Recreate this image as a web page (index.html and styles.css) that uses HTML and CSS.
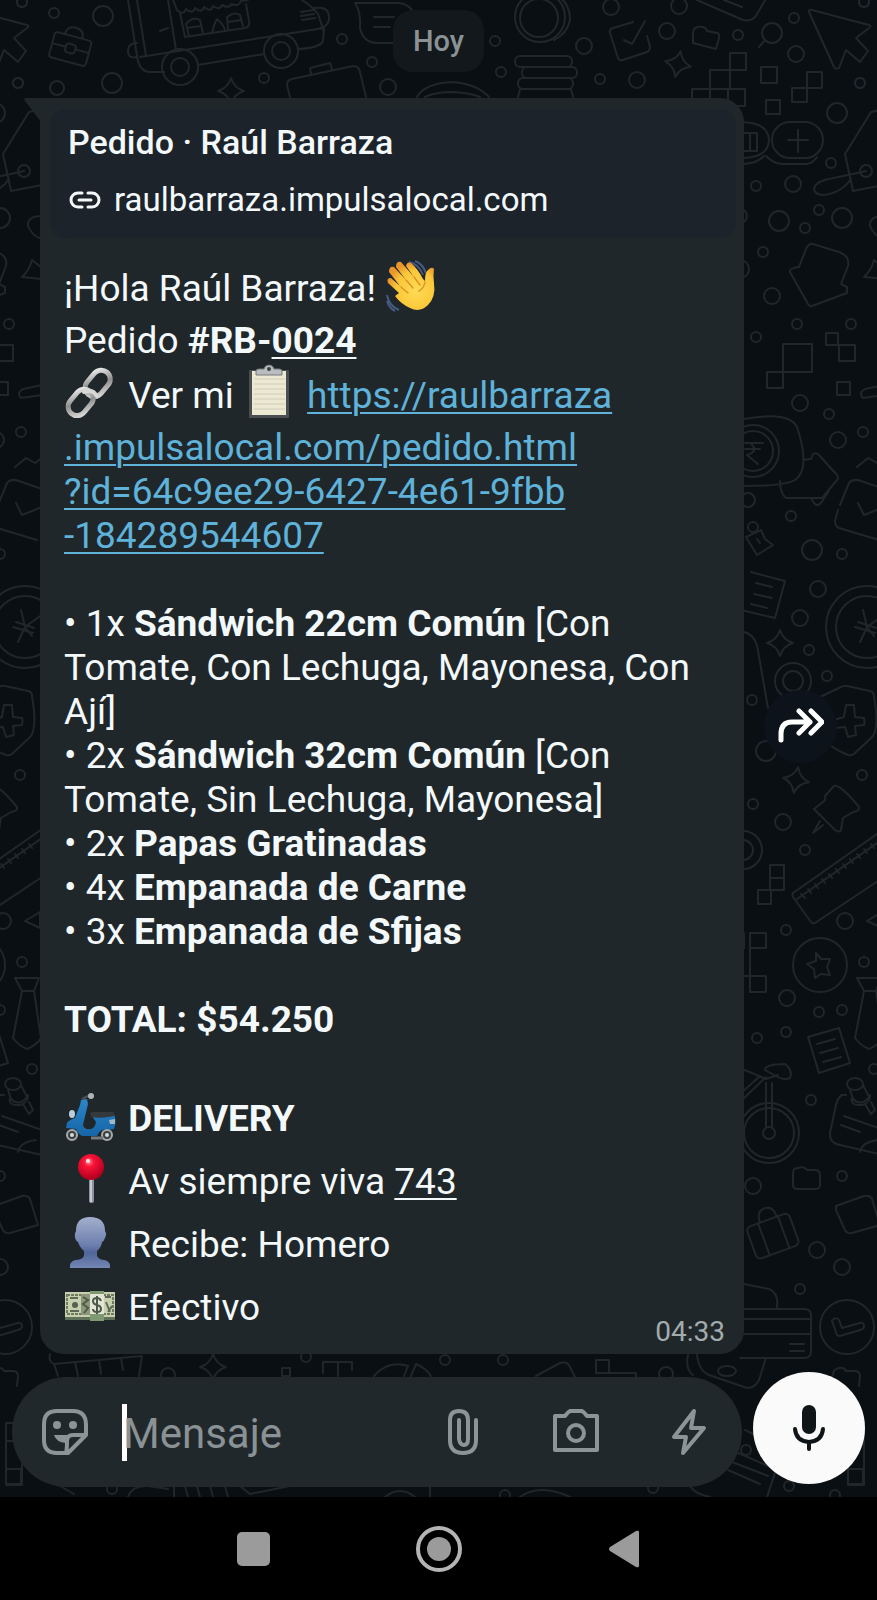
FILE: index.html
```html
<!DOCTYPE html>
<html lang="es">
<head>
  <meta charset="UTF-8" />
  <meta name="viewport" content="width=device-width, initial-scale=1" />
  <title>Pedido · Raúl Barraza</title>
  <link rel="stylesheet" href="styles.css">
</head>
<body>
  <main class="chat">
    <!-- Fondo con dibujos -->
    <svg class="wallpaper" aria-hidden="true">
      <defs>
        <path id="spark" d="M0-13Q3-3 13 0Q3 3 0 13Q-3 3-13 0Q-3-3 0-13z" />
        <g id="doodles">
          <!-- burbujas chicas -->
          <g>
            <circle cx="22" cy="2" r="5"/><circle cx="54" cy="13" r="5"/><circle cx="18" cy="83" r="5"/><circle cx="264" cy="78" r="5"/>
            <circle cx="342" cy="39" r="5"/><circle cx="372" cy="62" r="5"/><circle cx="495" cy="41" r="5"/><circle cx="501" cy="72" r="5"/>
            <circle cx="600" cy="79" r="5"/><circle cx="738" cy="35" r="5"/><circle cx="794" cy="18" r="5"/><circle cx="860" cy="83" r="5"/><circle cx="864" cy="2" r="5"/>
            <circle cx="831" cy="163" r="5"/><circle cx="756" cy="186" r="5"/><circle cx="819" cy="210" r="5"/><circle cx="805" cy="228" r="5"/>
            <circle cx="763" cy="252" r="5"/><circle cx="797" cy="324" r="5"/><circle cx="851" cy="324" r="5"/><circle cx="756" cy="337" r="5"/>
            <circle cx="829" cy="414" r="5"/><circle cx="863" cy="432" r="5"/><circle cx="791" cy="516" r="5"/><circle cx="842" cy="554" r="5"/>
            <circle cx="809" cy="650" r="5"/><circle cx="827" cy="676" r="5"/><circle cx="752" cy="700" r="5"/><circle cx="862" cy="775" r="5"/>
            <circle cx="753" cy="804" r="5"/><circle cx="805" cy="850" r="5"/><circle cx="786" cy="930" r="5"/><circle cx="864" cy="962" r="5"/>
            <circle cx="819" cy="1012" r="5"/><circle cx="842" cy="1010" r="5"/><circle cx="757" cy="1038" r="5"/><circle cx="786" cy="1032" r="5"/>
            <circle cx="874" cy="1069" r="5"/><circle cx="811" cy="1100" r="5"/><circle cx="842" cy="1176" r="5"/><circle cx="800" cy="1289" r="5"/>
            <circle cx="306" cy="1357" r="5"/><circle cx="445" cy="1360" r="5"/><circle cx="503" cy="1360" r="5"/><circle cx="112" cy="1489" r="5"/>
            <circle cx="653" cy="1488" r="5"/><circle cx="505" cy="1495" r="5"/><circle cx="789" cy="1486" r="5"/><circle cx="835" cy="1495" r="5"/><circle cx="168" cy="1375" r="7"/><circle cx="666" cy="1374" r="7"/>
          </g>
          <!-- burbujas grandes -->
          <g>
            <circle cx="103" cy="16" r="10"/><circle cx="57" cy="88" r="7"/><circle cx="112" cy="83" r="10"/><circle cx="388" cy="87" r="8"/>
            <circle cx="611" cy="7" r="8"/><circle cx="679" cy="6" r="8"/><circle cx="667" cy="31" r="8"/><circle cx="584" cy="46" r="8"/><circle cx="637" cy="80" r="8"/>
            <circle cx="796" cy="54" r="8"/><circle cx="837" cy="113" r="10"/><circle cx="793" cy="184" r="8"/><circle cx="779" cy="221" r="10"/><circle cx="842" cy="218" r="10"/>
            <circle cx="772" cy="296" r="8"/><circle cx="800" cy="403" r="8"/><circle cx="838" cy="440" r="8"/><circle cx="748" cy="500" r="7"/><circle cx="812" cy="550" r="10"/>
            <circle cx="818" cy="589" r="8"/><circle cx="800" cy="618" r="8"/><circle cx="766" cy="751" r="10"/><circle cx="783" cy="822" r="8"/>
            <circle cx="845" cy="921" r="8"/><circle cx="787" cy="998" r="8"/><circle cx="753" cy="1186" r="8"/><circle cx="817" cy="1250" r="8"/><circle cx="842" cy="1267" r="8"/>
            <circle cx="740" cy="269" r="9"/><circle cx="740" cy="216" r="7"/>
          </g>
          <!-- maletín -->
          <g transform="rotate(15 70 50)">
            <rect x="51" y="36" width="38" height="26" rx="3"/><path d="M61 36q0-9 9-9t9 9M51 48h14M75 48h14"/><rect x="65" y="44" width="10" height="9" rx="3"/>
          </g>
          <!-- camión de comida -->
          <path d="M128 0l9 56q2 15 12 16h15M198 65l66-11M298 49q22-1 25-8l1-13-184 29M137 43q-9 0-9 8t9 6M137 0l9 56M168 0l8 50M173 0l4 10q7 6 9-1q7 6 9-1q7 6 9-1q7 6 9-1q7 5 9-1q8 4 9-1q8 3 10-3l7-1M180 13l5 24 60-9q5-1 4-7l-3-17M160 31l8-3M302 0q12 8 16 14l6 18M301 12l12-2M301 16l13-2M302 20l13-2M314 8q14-2 15 8t-9 12"/>
          <path d="M189 36l-3-12q6-8 14-4l3 13M212 33q2-9 5-14 8 7 8 12M228 29l-1-12q8-6 13-2l3 11M187 28l14-2M228 22l13-2"/>
          <circle cx="180" cy="67" r="18"/><circle cx="180" cy="67" r="9"/><circle cx="281" cy="51" r="17"/><circle cx="281" cy="51" r="9"/>
          <use href="#spark" x="231" y="91"/>
          <path d="M290 97l-3-12q0-5 5-6l61-13q6 0 7 6l6 25M311 74l-1-6 20-5 2 6"/>
          <path d="M355 3h45q12 2 14 13M355 3q6 8 5 25q3 14 16 15h24M374 17h20M374 27h16"/>
          <path d="M417 97q8-14 36-15 24 2 36 15M425 97q10-5 28-5 18 1 27 5"/>
          <!-- monedas -->
          <circle cx="540" cy="17" r="25"/><circle cx="539" cy="18" r="19"/><path d="M548-8q22 6 22 28-3 14-16 20"/>
          <rect x="515" y="56" width="57" height="11" rx="5"/><rect x="522" y="67" width="55" height="11" rx="5"/><rect x="518" y="78" width="55" height="11" rx="5"/><path d="M518 97l2-8h51l2 8"/>
          <path d="M633 22l-20 6q-4 1-3 5l8 25q1 3 5 2l24-8q3-1 3-5l-3-11M624 40l8 4 13-23"/>
          <use href="#spark" transform="translate(678 64) rotate(12)"/>
          <path d="M693 33q0-5 5-6 8-1 9 4l10 2q3 1 2 5l-3 11-23-6zM697 0l46 20q10 2 14-6l10-17M724 0l18 7"/>
          <circle cx="772" cy="33" r="10"/><path d="M765 40l-6 7"/>
          <path d="M809 12q-1-3 3-2l57 15q3 1 0 3l-13 10 12 13-8 11-14-12-7 18q-3 2-5-1z"/>
          <!-- cuadritos -->
          <path d="M730 53h16v17h-16zM710 70h20v19h-20zM692 89h18v15h-18zM728 89h17v17h-17zM761 67h16v16h-16zM766 100h14v14h-14zM807 72h15v16h-15zM792 88h15v14h-15zM783 344h29v28h-29zM767 372h16v16h-16zM826 333h12v12h-12zM839 345h16v16h-16zM837 382h13v13h-13zM770 865h14v13h-14zM770 878h14v12h-14zM758 890h13v14h-13zM750 933h16v15h-16zM744 933v15M744 976h22v16h-16v-43M323 1373v-11h15v14M338 1362h14v8M596 1360h13v13h-13zM609 1373h27v8M848 1469h15v15h-15zM6 1423h16v18h-16zM6 1441h16v28h-16zM6 1469h16v16h-16zM282 1368h8v8h-8z"/>
          <!-- cápsulas -->
          <rect x="772" y="122" width="51" height="36" rx="18"/><path d="M766 156q8 8 17 8h24q6-1 10-7"/>
          <path d="M740 122q28 0 29 18-1 18-27 18M744 164q14-1 20-8M744 133h13v18h-13M750 133v18M788 140h20M798 130v22"/>
          <!-- etiqueta -->
          <path d="M884 109l-13 3-26 42 8 37 31-6M866 171C840 178 815 178 814 189 816 200 840 195 851 179"/><circle cx="866" cy="171" r="6"/>
          <path d="M884 216q-15 0-14 10 4 10 14 13M864 277q7-6 10-17l10 8M864 277l20 2"/>
          <path d="M813 244l26 8q11 4 9 14l-7 18 6 3v6l-35 13q-2 1-4-2l-18-32q-1-4 9-5l7-18q3-6 7-5z"/>
          <path d="M884 385l-19 4q-7 4-2 9l21-3M857 467l11-9 9 5 8-6"/>
          <!-- moneda rupia -->
          <circle cx="753" cy="451" r="26"/><circle cx="753" cy="451" r="20"/><path d="M745 443h18M745 449h15M750 443q10 8-3 12l11 9M744 419q45-8 53 8 14 42-2 53-10 6-51 6"/>
          <path d="M803 460l8-1 2-5q3-2 6 1l18 20q2 3 0 5l-15 18h-36q-6-5-6-17M840 505l9-22q4-5 12-2l23 8"/>
          <path d="M812 500q4 8 9 3l8-12M838 510l-3 11q0 5 4 7l40 12M858 503l6 12 20-8"/>
          <circle cx="753" cy="527" r="5"/><path d="M746 537l15-7 4 9 8 6-16 10zM757 539l3 4"/>
          <path d="M751 572l34 9-10 37-34-8M756 583l16 4M754 594l18 4M751 604l16 4"/>
          <use href="#spark" x="780" y="643"/>
          <circle cx="867" cy="627" r="41"/><circle cx="867" cy="627" r="31"/><path d="M863 610l4 17-7 15M867 627l18-13M855 627l20 6M858 622l18 6M867 627l7 9"/>
          <circle cx="793" cy="681" r="18"/><circle cx="793" cy="681" r="10"/><path d="M744 632q12 3 14 19l10 57"/>
          <!-- escudo -->
          <path d="M820 697l21-10q3-2 6-1l23 5q4 1 4 5 6 35-3 42l-17 16q-3 2-6 1-22-9-30-24-4-20 2-34z"/><path d="M846 705h8l1 12 9 1q1 4 0 7l-9 1 1 9-8 2-3-10-9 1-2-8 10-3z"/>
          <use href="#spark" transform="translate(796 780) rotate(10)"/>
          <path d="M814 809l9-7q3-2 2-6l9-10q6-2 25 21 1 4-6 5l-10 6-2 12q-1 3-6 0zM820 821l-7 12 10-8"/>
          <path d="M884 829l-91 64q-1 2 0 4l18 25q2 2 4 1l69-46M797 899l87-61M801 894l4 4M808 889l3 4M815 884l3 4M822 879l3 4M829 874l3 4M836 869l3 4M843 864l3 4M850 859l3 4M857 854l3 4M864 849l3 4M871 844l3 4"/>
          <path d="M867 921l15-9v16z"/>
          <circle cx="743" cy="850" r="19"/><circle cx="743" cy="850" r="10"/>
          <circle cx="820" cy="965" r="27"/><path d="M816 953l5 6 9 0-3 8 3 8-9-1-6 4-1-9-7-5 9-3z"/>
          <!-- corbata -->
          <path d="M857 978h24l-5 13h-12zM864 991l-9 47q6 8 14 11 10-4 14-11l-7-47"/>
          <path d="M808 1037l31-9 11 35-31 10zM817 1044l18-5M820 1053l18-5M823 1062l18-5"/>
          <!-- bicicleta -->
          <circle cx="769" cy="1133" r="30"/><circle cx="769" cy="1133" r="25"/><circle cx="769" cy="1133" r="6"/><path d="M766 1127v-44M772 1127v-44M740 1068l26 11 12-4M740 1102l26-25M740 1094l20-18M765 1070q0-6 20-6 8 6 5 14-6 3-16-3z"/>
          <path d="M846 1095h-4q-4 2-6 10l-6 28q-1 10 10 12l44 10M844 1116l40 14M841 1125l19 7M860 1152q2-10 18-12"/>
          <ellipse cx="855" cy="1084" rx="8" ry="6"/><path d="M850 1090l3 9q8 8 16-2l-6-12M852 1098q-2 8 10 7 9-3 8-10M865 1104l6 10 4-4-4-8"/>
          <path d="M793 1173q0-5 5-5 6-2 9 2h9q4 1 4 5v11q-1 3-4 3h-18q-5 0-5-4z"/>
          <g transform="rotate(-20 773 1235)"><rect x="750" y="1219" width="45" height="34" rx="5"/><path d="M763 1219v34M784 1219v34M765 1219q0-12 9-12t9 12"/></g>
          <path d="M836 1206l28-10q6-1 8 3l8 26-28 8q-6 1-8-5l-8-18z"/>
          <path d="M744 1284l25 5q10 4 8 19M740 1309h64q7 0 7 6v36q0 7-7 7h-64M740 1319h71M740 1334h71M790 1344h14M790 1351h14"/>
          <circle cx="847" cy="1327" r="27"/><path d="M832 1321q3-5 7-1l3 8 18-5q4-1 4 3 0 3-4 4l-20 6q-4 0-4-4z"/>
          <path d="M833 1375q0-6 6-7 5-1 7 3h10q4 1 4 5l-1 10"/>
          <path d="M688 1355q-3 14 5 20M697 1355q2 16 12 20l38 13q8 0 12-8l7-22"/><ellipse cx="727" cy="1371" rx="9" ry="5"/>
          <path d="M50 1354q-2 8 4 10l88-8-3 20M54 1364l4 12M75 1362l3 14M99 1360l2 14M121 1358l2 12"/>
          <use href="#spark" x="213" y="1367"/>
          <path d="M374 1376q14-16 34-10l-4 10M411 1376l5-12q10 4 15 12M536 1376l24-13q8-2 10 4l5 10"/>
          <path d="M732 1462l36 14M728 1470l32 14M736 1452l32 14M745 1430l16 8M690 1486q5 8 20 11M776 1470l-9 27M128 1497q4-12 20-11l20 3M174 1486v11M185 1486l3 11M197 1486l3 11M210 1486l3 11M225 1486l3 11M240 1486l10 8 40-8M60 1486l14 8M385 1497q15-12 30 0M520 1497q20-14 50 0M430 1486v11"/><circle cx="746" cy="1450" r="5"/>
        </g>
      </defs>
      <use href="#doodles"/>
      <use href="#doodles" x="-842"/>
      <use href="#doodles" x="842"/>
    </svg>

    <div class="day">Hoy</div>

    <div class="row">
      <article class="bubble">
        <svg class="tail" viewBox="0 0 17 24" aria-hidden="true"><path d="M17 0H2Q-1 0 1 3L17 24z"/></svg>
        <div class="preview">
          <h1 class="preview-title">Pedido · Raúl Barraza</h1>
          <a class="preview-link" href="#">
            <svg class="icon-link" viewBox="0 0 34 20" aria-hidden="true"><path d="M14 3h-4a7 7 0 0 0 0 14h4M20 3h4a7 7 0 0 1 0 14h-4M11 10h12"/></svg>
            raulbarraza.impulsalocal.com
          </a>
        </div>

        <div class="message">
          <p>
            ¡Hola Raúl Barraza!
            <svg class="emoji" viewBox="0 -2 52 63" aria-hidden="true">
              <defs><radialGradient id="skin" cx=".6" cy=".6" r=".6"><stop offset="0" stop-color="#ffdc55"/><stop offset=".7" stop-color="#fbc638"/><stop offset="1" stop-color="#e9952c"/></radialGradient></defs>
              <path d="M24 4q10 2 14 13M30 3q8 3 11 12M2 37q2 11 12 15M2 43q2 7 8 10" fill="none" stroke="#475a84" stroke-width="2"/>
              <path d="M14 35L3 25q-2-5 3-5l9 8L4 14q0-6 5-5l12 13L11 9q0-6 5-5l13 15-8-11q1-5 5-3 7 6 12 16l2 2q0-9 3-11 4-4 6-1-1 6 0 14 2 14-6 22-8 8-18 3-9-4-15-12z" fill="url(#skin)"/>
              <path d="M16 29l7 6M21 22l7 8M29 19l6 8M40 24q-1 6-6 9" fill="none" stroke="#dd922b" stroke-width="1.5" stroke-linecap="round"/>
            </svg>
          </p>
          <p>Pedido <b>#RB-<u>0024</u></b></p>
          <p>
            <svg class="emoji" viewBox="0 -2 52 63" aria-hidden="true">
              <defs><linearGradient id="steel" x1="0" y1="0" x2="1" y2="1"><stop offset="0" stop-color="#f2f2f2"/><stop offset=".5" stop-color="#8e8e8e"/><stop offset="1" stop-color="#e2e2e0"/></linearGradient></defs>
              <g fill="none" stroke="url(#steel)" stroke-width="5">
                <rect x="25" y="4" width="18" height="29" rx="9" transform="rotate(40 34 18)"/>
                <rect x="8" y="23" width="18" height="29" rx="9" transform="rotate(40 17 37)"/>
              </g>
              <path d="M20 27q9-3 12 3" fill="none" stroke="#d7d7d5" stroke-width="4" stroke-linecap="round"/>
            </svg>
            Ver mi
            <svg class="emoji" viewBox="0 -2 52 63" aria-hidden="true">
              <rect x="6" y="5" width="40" height="48" rx="1" fill="#4b4e50"/>
              <path d="M9 6h34v44H9z" fill="#ece9d3"/>
              <path d="M11 14h31M11 19h31M11 24h31M11 29h31M11 34h31M11 39h31M11 44h31" stroke="#cfccb8" stroke-width="1"/>
              <path d="M13 10V6q0-2 3-2h5q1-4 5-4t5 4h5q3 0 3 2v4z" fill="#babdc0" stroke="#74787b" stroke-width="1"/>
              <circle cx="26" cy="4" r="2" fill="#3b3f42"/>
            </svg>
            <a href="#">https://raulbarraza<br>.impulsalocal.com/pedido.html<br>?id=64c9ee29-6427-4e61-9fbb<br>-184289544607</a>
          </p>

          <ul class="items">
            <li>• 1x <b>Sándwich 22cm Común</b> [Con Tomate, Con Lechuga, Mayonesa, Con Ají]</li>
            <li>• 2x <b>Sándwich 32cm Común</b> [Con Tomate, Sin Lechuga, Mayonesa]</li>
            <li>• 2x <b>Papas Gratinadas</b></li>
            <li>• 4x <b>Empanada de Carne</b></li>
            <li>• 3x <b>Empanada de Sfijas</b></li>
          </ul>

          <p class="total"><b>TOTAL: $54.250</b></p>

          <p>
            <svg class="emoji" viewBox="0 -2 52 63" aria-hidden="true">
              <defs><linearGradient id="blue" x1="0" y1="0" x2="0" y2="1"><stop offset="0" stop-color="#2b86c8"/><stop offset="1" stop-color="#1565a8"/></linearGradient></defs>
              <path d="M18 11l8-4" stroke="#4d5357" stroke-width="2"/>
              <circle cx="27" cy="8" r="3" fill="#aeb5b8"/>
              <path d="M17 12l6-1 1 5-5 21q1 5 8 4 4-1 5-7l-4-6 1-3 21 1q3 8 0 15l-5 1q-8-3-12 6H18q-4-2-6-7l-10-1q0-8 9-10l5-13z" fill="url(#blue)"/>
              <ellipse cx="8" cy="26" rx="3" ry="4" fill="#b8d0dd"/>
              <path d="M26 25q3-2 9-1h15v4q-12 3-23 1z" fill="#34393c"/>
              <path d="M45 32l6-1v5h-5z" fill="#9fb8c6"/>
              <g fill="#3b4043" stroke="#a5abad" stroke-width="2"><circle cx="8" cy="47" r="5"/><circle cx="43" cy="47" r="5"/></g>
              <circle cx="8" cy="47" r="2" fill="#d5d9da"/><circle cx="43" cy="47" r="2" fill="#d5d9da"/>
              <path d="M27 50h12" stroke="#73797c" stroke-width="3"/>
            </svg>
            <b>DELIVERY</b>
          </p>
          <p>
            <svg class="emoji" viewBox="0 -2 52 63" aria-hidden="true">
              <defs><radialGradient id="red" cx=".42" cy=".3" r=".65"><stop offset="0" stop-color="#ff8792"/><stop offset=".3" stop-color="#fb1237"/><stop offset="1" stop-color="#b50020"/></radialGradient></defs>
              <rect x="25" y="26" width="5" height="26" rx="2" fill="#8d90a0"/>
              <path d="M27 28v23" stroke="#c7c9d4" stroke-width="2"/>
              <circle cx="27" cy="16" r="13" fill="url(#red)"/>
              <circle cx="24" cy="10" r="2" fill="#ffe4e6"/>
            </svg>
            Av siempre viva <u>743</u>
          </p>
          <p>
            <svg class="emoji" viewBox="0 -2 52 63" aria-hidden="true">
              <defs><linearGradient id="bust" x1="0" y1="0" x2="0" y2="1"><stop offset="0" stop-color="#a3afcd"/><stop offset=".55" stop-color="#6c7fae"/><stop offset=".7" stop-color="#50659a"/><stop offset="1" stop-color="#7487b5"/></linearGradient></defs>
              <path d="M26 3q15 0 15 14 2 3 0 7-1 3-3 4-1 6-5 9v5q2 4 8 4 6 2 5 8H6q-1-6 5-8 7 0 9-4v-5q-4-3-6-9-2-1-3-4-1-4 1-7Q12 3 26 3z" fill="url(#bust)"/>
            </svg>
            Recibe: Homero
          </p>
          <p>
            <svg class="emoji" viewBox="0 -1 52 63" aria-hidden="true">
              <path d="M1 16h50v28H1z" fill="#5f7259"/>
              <path d="M1 16h50v25H1z" fill="#c8cfae"/>
              <path d="M3 19h46v19H3z" fill="none" stroke="#6d7b61" stroke-width="2" stroke-dasharray="3 1"/>
              <path d="M17 18h9v21h-9z" fill="#8c967b"/>
              <path d="M19 21l5 3-5 4 5 4-4 5" fill="none" stroke="#4f5a48" stroke-width="2"/>
              <circle cx="11" cy="29" r="3" fill="#566150"/>
              <path d="M6 22h8M6 35h9M41 21h6M42 26l4 10M44 36l4-6" stroke="#5e6a55" stroke-width="2"/>
              <path d="M26 15h14v30H26z" fill="#7f9a72"/><path d="M26 18h14v20H26z" fill="#e4e6d5"/>
              <path d="M37 25q-1-3-4-3-4 0-4 3 0 3 4 4t4 4q0 3-4 3t-4-3M33 20v18" fill="none" stroke="#4c5946" stroke-width="2"/>
            </svg>
            Efectivo
          </p>
        </div>
        <time class="time">04:33</time>
      </article>

      <button class="forward" type="button" aria-label="Reenviar">
        <svg viewBox="0 0 46 36" aria-hidden="true"><path d="M3 32v-6q0-12 11-12h18M21 3l11 11-11 11M33 3l11 11-11 11"/></svg>
      </button>
    </div>

    <form class="composer">
      <div class="field">
        <button type="button" aria-label="Stickers">
          <svg viewBox="0 0 48 48" aria-hidden="true">
            <path class="line" d="M16 3h16q13 0 13 14v10L27 45H16Q3 45 3 32V16Q3 3 16 3zM25 45q1-4 1-12 0-6 6-6h13"/>
            <circle cx="16" cy="17" r="4"/><circle cx="32" cy="17" r="4"/><path d="M13 27h15q-3 2-3 8-10-1-12-8z"/>
          </svg>
        </button>
        <label class="entry">
          <span class="caret"></span>
          <input type="text" placeholder="Mensaje" aria-label="Mensaje">
        </label>
        <button type="button" aria-label="Adjuntar">
          <svg viewBox="0 0 48 48" aria-hidden="true"><path class="line" d="M37 12v20q0 13-13 13-13 0-13-13V12q0-9 9-9t9 9v19q0 6-4 6t-5-6V12"/></svg>
        </button>
        <button type="button" aria-label="Cámara">
          <svg viewBox="0 0 48 48" aria-hidden="true"><path class="line" d="M3 8h10q3-4 5-5h12q2 1 5 5h10v34H3z"/><circle class="line" cx="24" cy="25" r="8"/></svg>
        </button>
        <button type="button" aria-label="Respuestas rápidas">
          <svg viewBox="0 0 48 48" aria-hidden="true"><path class="line" d="M29 3L9 29h12l-3 16 21-25H26z"/></svg>
        </button>
      </div>
      <button class="mic" type="button" aria-label="Grabar audio">
        <svg viewBox="0 0 34 46" aria-hidden="true"><rect x="10" y="0" width="14" height="29" rx="7"/><path d="M3 24q1 12 14 13 13-1 14-13M17 37v7"/></svg>
      </button>
    </form>
  </main>

  <nav class="navbar">
    <button type="button" aria-label="Recientes"><svg viewBox="0 0 46 46" aria-hidden="true"><rect x="7" y="6" width="33" height="34" rx="5"/></svg></button>
    <button type="button" aria-label="Inicio"><svg viewBox="0 0 46 46" aria-hidden="true"><circle cx="23" cy="23" r="12"/><circle class="ring" cx="23" cy="23" r="21"/></svg></button>
    <button type="button" aria-label="Atrás"><svg viewBox="0 0 46 46" aria-hidden="true"><path d="M37 6v34q0 2-3 1L8 25q-2-2 0-4L34 5q3-1 3 1z"/></svg></button>
  </nav>
</body>
</html>
```

FILE: styles.css
```css
* {
  box-sizing: border-box;
}

body {
  margin: 0;
  min-height: 100vh;
  display: flex;
  flex-direction: column;
  background: #000;
  color: #f3f8fa;
  font-family: Roboto, "Liberation Sans", sans-serif;
}

button {
  display: flex;
  align-items: center;
  justify-content: center;
  padding: 0;
  border: 0;
  background: none;
  cursor: pointer;
}

.chat {
  position: relative;
  flex: 1;
  display: flex;
  flex-direction: column;
  overflow: hidden;
  padding: 10px 12px;
  background: #0a0f13;
}

.wallpaper {
  position: absolute;
  top: 0;
  left: 0;
  width: 100%;
  height: 100%;
  fill: none;
  stroke: #20262a;
  stroke-width: 2;
  stroke-linecap: round;
  stroke-linejoin: round;
}

.day {
  position: relative;
  align-self: center;
  padding: 1px 20px 0;
  border-radius: 20px;
  background: #12181b;
  color: #8b9295;
  font-size: 29px;
  font-weight: 500;
  line-height: 61px;
}

/* Mensaje */
.row {
  position: relative;
  display: flex;
  align-items: center;
  gap: 20px;
  margin: 26px 28px 0;
}

.bubble {
  position: relative;
  flex: 1;
  padding: 11px 8px 16px 10px;
  border-radius: 0 24px 24px 24px;
  background: #1f272a;
}

.tail {
  position: absolute;
  top: 0;
  left: -16px;
  width: 17px;
  fill: #1f272a;
}

.preview {
  padding: 12px 18px 17px;
  border-radius: 16px;
  background: #1c232a;
}

.preview-title {
  margin: 0 0 16px;
  font-size: 34px;
  font-weight: 500;
  line-height: 42px;
}

.preview-link {
  display: flex;
  align-items: center;
  gap: 12px;
  color: inherit;
  font-size: 33px;
  line-height: 42px;
  text-decoration: none;
}

.icon-link {
  width: 34px;
  fill: none;
  stroke: currentColor;
  stroke-width: 3;
  stroke-linecap: round;
}

.message {
  padding: 18px 14px 0;
  font-size: 37px;
  line-height: 44px;
}

.message p {
  margin: 0;
}

.message u,
.message a {
  text-decoration-thickness: 2px;
  text-underline-offset: 4px;
}

.message a {
  color: #5fb2d9;
}

.emoji {
  width: 52px;
  height: 63px;
  margin-right: 3px;
  vertical-align: -18px;
}

.items {
  margin: 44px 0;
  padding: 0;
  list-style: none;
}

.message .total {
  margin-bottom: 44px;
}

.time {
  position: absolute;
  right: 19px;
  bottom: 6px;
  color: #a3abad;
  font-size: 28px;
  line-height: 32px;
}

.forward {
  width: 73px;
  height: 73px;
  border-radius: 50%;
  background: #0c131a;
}

.forward svg {
  width: 46px;
  fill: none;
  stroke: #fff;
  stroke-width: 5;
  stroke-linecap: round;
  stroke-linejoin: round;
}

/* Barra para escribir */
.composer {
  position: relative;
  display: flex;
  align-items: flex-end;
  gap: 11px;
  margin-top: auto;
}

.field {
  flex: 1;
  min-width: 0;
  display: flex;
  align-items: center;
  gap: 57px;
  height: 110px;
  padding: 0 25px;
  border-radius: 55px;
  background: #20282b;
}

.field button {
  flex: none;
  width: 56px;
  height: 56px;
}

.field svg {
  width: 48px;
  fill: #8c9497;
}

.field .line {
  fill: none;
  stroke: #8c9497;
  stroke-width: 4;
  stroke-linecap: round;
  stroke-linejoin: round;
}

.entry {
  flex: 1;
  min-width: 0;
  display: flex;
  align-items: center;
  margin-left: -28px;
}

.caret {
  flex: none;
  width: 5px;
  height: 57px;
  margin-right: -4px;
  background: #fff;
}

.entry input {
  width: 100%;
  min-width: 0;
  padding: 2px 0 0;
  border: 0;
  outline: 0;
  background: none;
  color: inherit;
  font: 42px Roboto, "Liberation Sans", sans-serif;
}

.entry input::placeholder {
  color: #8a9295;
  opacity: 1;
}

.mic {
  flex: none;
  width: 112px;
  height: 112px;
  margin-bottom: 3px;
  border-radius: 50%;
  background: #fafafa;
}

.mic svg {
  width: 34px;
  fill: #101518;
}

.mic path {
  fill: none;
  stroke: #101518;
  stroke-width: 4;
  stroke-linecap: round;
}

/* Botones del sistema */
.navbar {
  display: flex;
  justify-content: center;
  height: 103px;
  background: #000;
}

.navbar button {
  flex: 0 1 186px;
}

.navbar svg {
  width: 46px;
  fill: #9b9b9b;
}

.navbar .ring {
  fill: none;
  stroke: #b4b4b4;
  stroke-width: 4;
}
```
